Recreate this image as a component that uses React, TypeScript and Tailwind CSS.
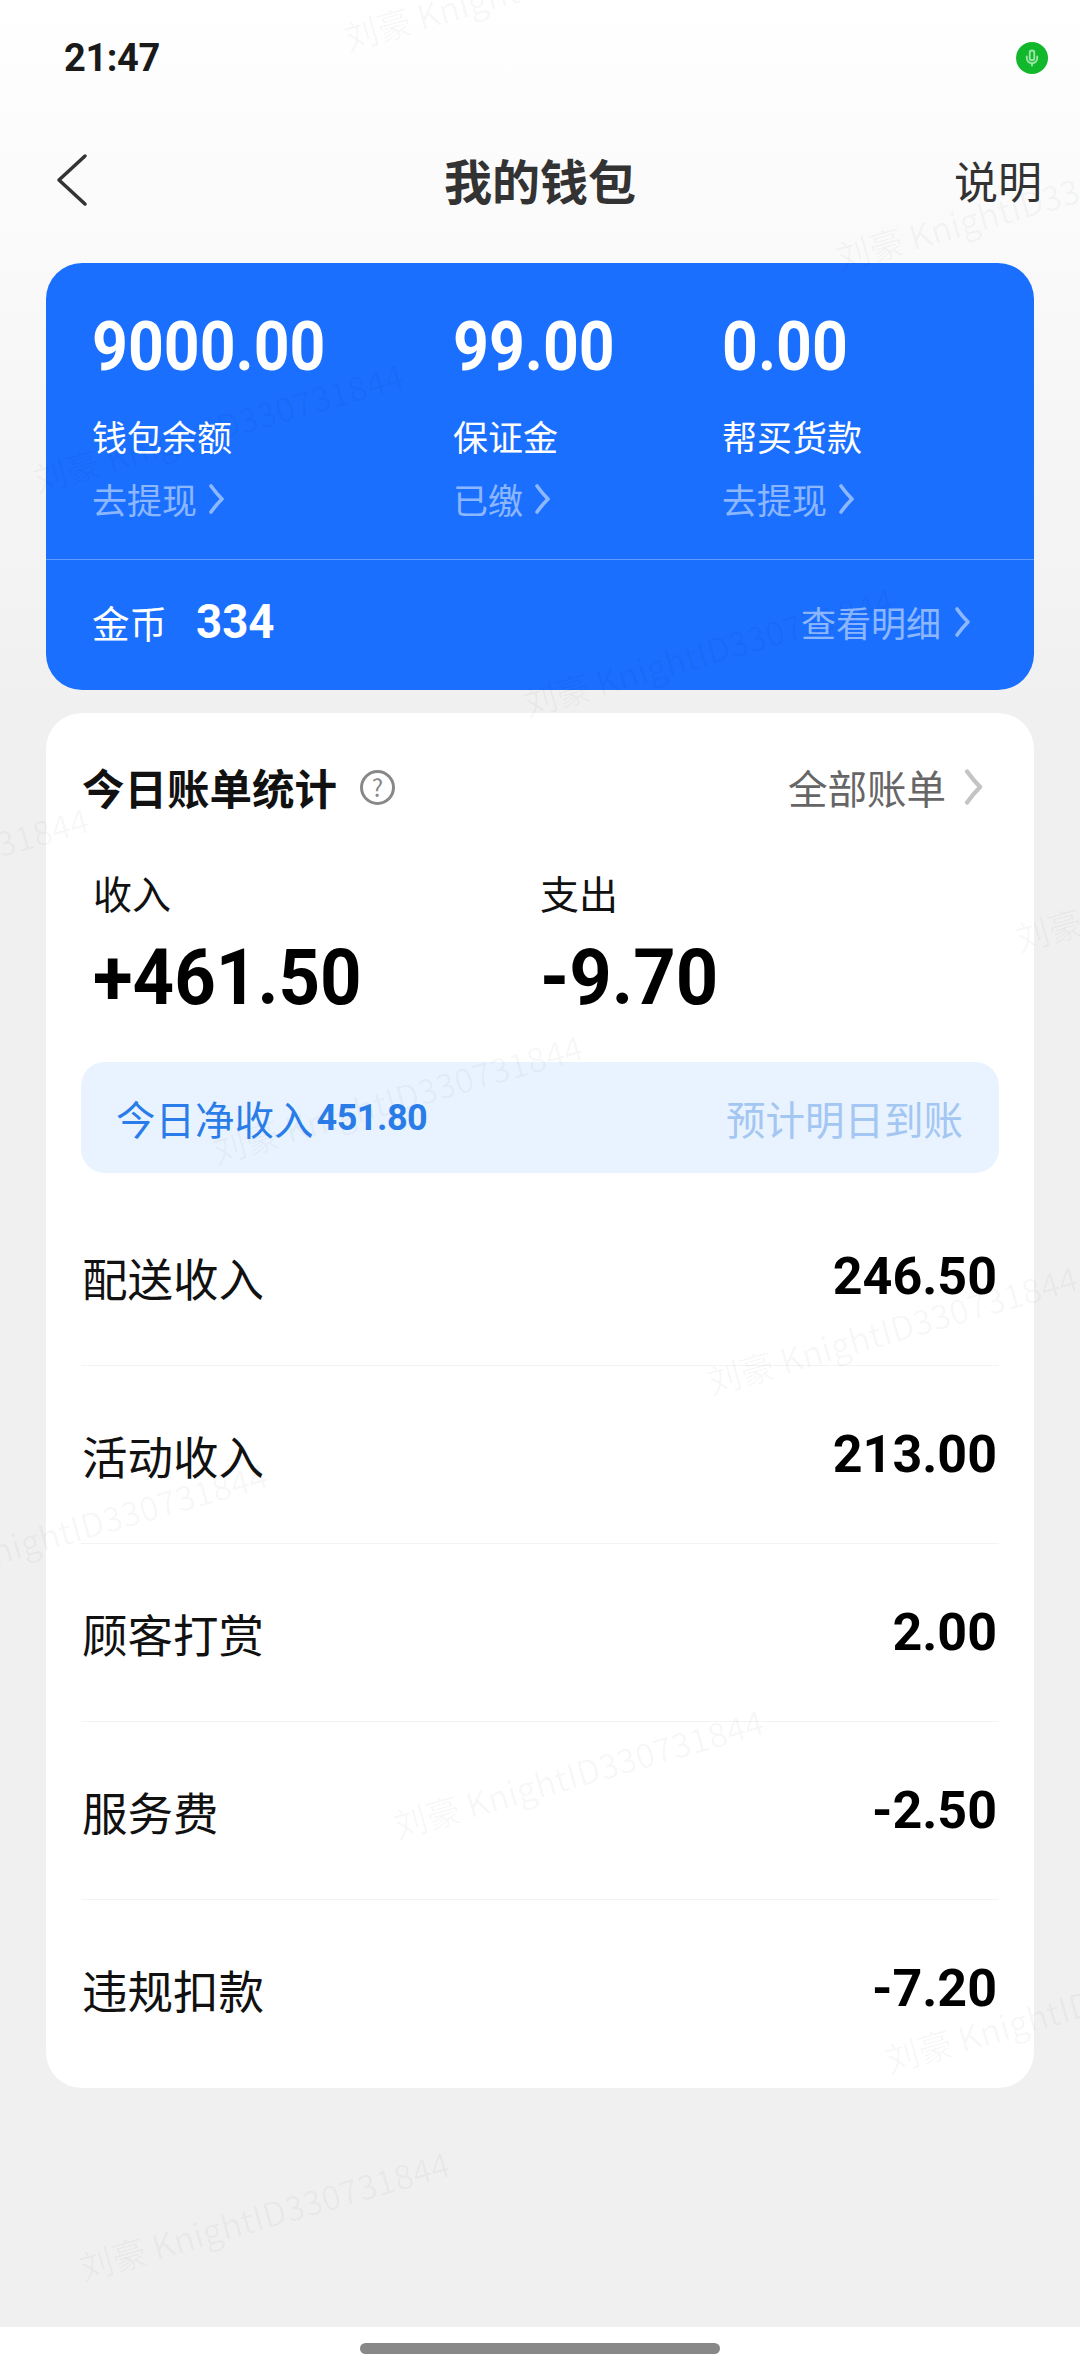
import { Mic } from "lucide-react";

const SANS = "font-['Noto_Sans_CJK_SC','Noto_Sans',sans-serif]";
const NUM = "font-['Roboto','Noto_Sans_CJK_SC',sans-serif]";

const WALLET = [
  { value: "9000.00", label: "钱包余额", action: "去提现", width: "w-[361px]" },
  { value: "99.00", label: "保证金", action: "已缴", width: "w-[269px]" },
  { value: "0.00", label: "帮买货款", action: "去提现", width: "w-[238px]" },
];

const ROWS = [
  { label: "配送收入", value: "246.50" },
  { label: "活动收入", value: "213.00" },
  { label: "顾客打赏", value: "2.00" },
  { label: "服务费", value: "-2.50" },
  { label: "违规扣款", value: "-7.20" },
];

// full class strings, one per watermark stamp
const WATERMARKS = [
  "left-[529px] top-[-15px]",
  "left-[1021px] top-[205px]",
  "left-[218px] top-[427px]",
  "left-[708px] top-[651px]",
  "left-[-97px] top-[871px]",
  "left-[1200px] top-[886px]",
  "left-[397px] top-[1098px]",
  "left-[892px] top-[1329px]",
  "left-[82px] top-[1526px]",
  "left-[578px] top-[1773px]",
  "left-[1070px] top-[2007px]",
  "left-[264px] top-[2215px]",
];

function Chevron({ className }: { className: string }) {
  return (
    <svg className={className} viewBox="0 0 16 32" fill="none" stroke="currentColor" strokeWidth={3.6} strokeLinecap="round" strokeLinejoin="round">
      <path d="M3 3 C8 10 11 13 14 16 C11 19 8 22 3 29" />
    </svg>
  );
}

export default function App() {
  return (
    <div className={`${SANS} relative w-[1080px] h-[2376px] overflow-hidden flex flex-col bg-gradient-to-b from-white to-[#f0f0f0] to-[30%]`}>
      {/* Status bar */}
      <div className="h-[116px] shrink-0 flex items-start justify-between pl-[64px] pr-[32px] pt-[34px]">
        <span className={`${NUM} text-[38px] leading-[48px] font-bold text-[#1a1a1a] tracking-[-0.4px]`}>21:47</span>
        <span className="mt-[8px] w-[32px] h-[32px] rounded-full bg-[#12b82c] flex items-center justify-center">
          <Mic className="w-[18px] h-[18px] text-[#9be6a6]" strokeWidth={2.5} />
        </span>
      </div>

      {/* Header */}
      <div className="h-[132px] shrink-0 relative flex items-center justify-center">
        <svg className="absolute left-[56px] top-[37px] w-[32px] h-[54px] text-[#333333]" viewBox="0 0 32 54" fill="none" stroke="currentColor" strokeWidth={3.5} strokeLinecap="round" strokeLinejoin="round">
          <path d="M29 3 L3 27 L29 51" />
        </svg>
        <h1 className="text-[48px] leading-[64px] font-bold text-[#333333] -translate-y-[3px]">我的钱包</h1>
        <span className="absolute right-[38px] top-[32px] text-[44px] leading-[64px] text-[#333333]">说明</span>
      </div>

      {/* Wallet card */}
      <div className="mt-[15px] mx-[46px] h-[427px] shrink-0 rounded-[36px] bg-[#1a6fff] text-white flex flex-col">
        <div className="h-[297px] flex pl-[46px] pt-[48px] border-b border-white/30">
          {WALLET.map((item) => (
            <div key={item.label} className={item.width}>
              <div className={`${NUM} text-[68px] leading-[72px] font-bold origin-left scale-x-[0.92]`}>{item.value}</div>
              <div className="mt-[29px] text-[35px] leading-[48px]">{item.label}</div>
              <div className="mt-[15px] flex items-center gap-[10px] text-[35px] leading-[48px] text-white/50">
                {item.action}
                <Chevron className="w-[18px] h-[32px]" />
              </div>
            </div>
          ))}
        </div>
        <div className="flex-1 flex items-center justify-between pl-[46px] pr-[63px] pb-[6px]">
          <div className="flex items-center gap-[29px]">
            <span className="text-[37.5px] leading-[48px]">金币</span>
            <span className={`${NUM} text-[48px] leading-[48px] font-bold origin-left scale-x-[0.95]`}>334</span>
          </div>
          <div className="flex items-center gap-[12px] text-[35px] leading-[48px] text-white/50">
            查看明细
            <Chevron className="w-[18px] h-[32px]" />
          </div>
        </div>
      </div>

      {/* Bill card */}
      <div className="mt-[23px] mx-[46px] h-[1375px] shrink-0 rounded-[36px] bg-white pt-[44px]">
        <div className="h-[60px] flex items-center justify-between pl-[36px] pr-[51px]">
          <div className="flex items-center gap-[23px]">
            <span className="text-[42.5px] leading-[60px] font-bold text-[#111111]">今日账单统计</span>
            <span className="w-[35px] h-[35px] rounded-full border-[3px] border-[#888888] flex items-center justify-center text-[24px] leading-none text-[#888888]">?</span>
          </div>
          <div className="flex items-center gap-[17px] text-[39.5px] leading-[60px] text-[#666666]">
            全部账单
            <Chevron className="w-[20px] h-[38px] text-[#c4c4c4]" />
          </div>
        </div>

        <div className="mt-[50px] flex pl-[47px]">
          <div className="w-[447px]">
            <div className="text-[39px] leading-[50px] text-[#111111]">收入</div>
            <div className={`${NUM} mt-[16px] text-[78px] leading-[90px] font-bold text-black origin-left scale-x-[0.93]`}>+461.50</div>
          </div>
          <div>
            <div className="text-[39px] leading-[50px] text-[#111111]">支出</div>
            <div className={`${NUM} mt-[16px] text-[78px] leading-[90px] font-bold text-black origin-left scale-x-[0.95]`}>-9.70</div>
          </div>
        </div>

        <div className="mt-[39px] mx-[35px] h-[111px] rounded-[24px] bg-[#e8f3ff] flex items-center justify-between pl-[35px] pr-[36px]">
          <div className="flex items-center gap-[3px] text-[#2a7de9]">
            <span className="text-[39.5px] leading-[56px]">今日净收入</span>
            <span className={`${NUM} text-[36px] leading-[48px] font-bold tracking-[-0.5px]`}>451.80</span>
          </div>
          <span className="text-[39.5px] leading-[56px] text-[#a3c6f2]">预计明日到账</span>
        </div>

        <div className="mt-[15px] mx-[35px]">
          {ROWS.map((row, i) => (
            <div
              key={row.label}
              className={`h-[178px] flex items-center justify-between pl-[1px] pr-[2px] ${i < ROWS.length - 1 ? "border-b border-[#f3f3f3]" : ""}`}
            >
              <span className="text-[45.5px] leading-[60px] text-[#111111]">{row.label}</span>
              <span className={`${NUM} text-[52px] leading-[60px] font-bold text-black`}>{row.value}</span>
            </div>
          ))}
        </div>
      </div>

      {/* Nav bar */}
      <div className="mt-auto h-[49px] shrink-0 bg-white flex justify-center pt-[16px]">
        <div className="w-[360px] h-[11px] rounded-full bg-[#888888]" />
      </div>

      {/* Watermark stamps over the whole screen */}
      {WATERMARKS.map((pos) => (
        <span
          key={pos}
          className={`absolute ${pos} -translate-x-1/2 -translate-y-1/2 rotate-[-16deg] whitespace-nowrap pointer-events-none text-[34px] leading-[40px] text-black/[0.035]`}
        >
          刘豪 KnightID330731844
        </span>
      ))}
    </div>
  );
}
